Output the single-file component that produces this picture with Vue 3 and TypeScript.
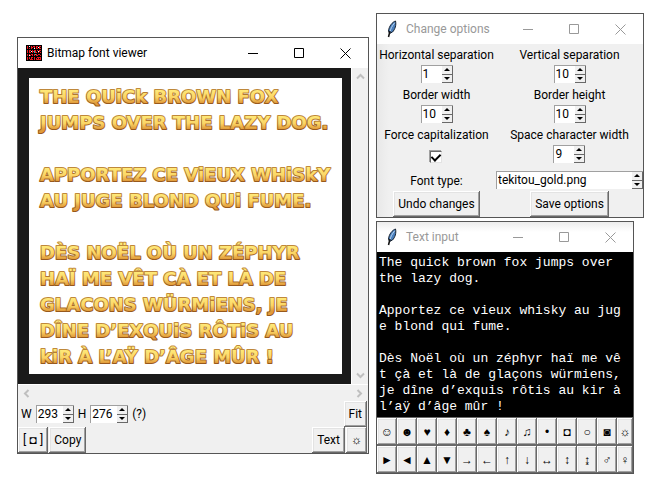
<script setup lang="ts">
import { ref } from 'vue'

interface NumberField {
  id: string
  label: string
  value: string
}

const viewWidth = ref('293')
const viewHeight = ref('276')
const fontFile = ref('tekitou_gold.png')
const forceCaps = ref(true)

const separations = ref<NumberField[]>([
  { id: 'hsep', label: 'Horizontal separation', value: '1' },
  { id: 'vsep', label: 'Vertical separation', value: '10' },
  { id: 'bwidth', label: 'Border width', value: '10' },
  { id: 'bheight', label: 'Border height', value: '10' },
])
const spaceWidth = ref('9')

const rendered: string[] = [
  'THE QUiCk BROWN FOX',
  'JUMPS OVER THE LAZY DOG.',
  '',
  'APPORTEZ CE ViEUX WHiSkY',
  'AU JUGE BLOND QUi FUME.',
  '',
  'DÈS NOËL OÙ UN ZÉPHYR',
  'HAÏ ME VÊT CÀ ET LÀ DE',
  'GLACONS WÜRMiENS, JE',
  'DÎNE D’EXQUiS RÔTiS AU',
  'kiR À L’AŸ D’ÂGE MÛR !',
]

const source = ref(
  'The quick brown fox jumps over the lazy dog.\n\n' +
    'Apportez ce vieux whisky au juge blond qui fume.\n\n' +
    'Dès Noël où un zéphyr haï me vêt çà et là de glaçons würmiens, je dîne d’exquis rôtis au kir à l’aÿ d’âge mûr !',
)

const symbols: string[] = [
  '☺', '☻', '♥', '♦', '♣', '♠', '♪', '♫', '•', '◘', '○', '◙', '☼',
  '►', '◄', '▲', '▼', '→', '←', '↑', '↓', '↔', '↕', '↨', '♂', '♀',
]

const iconPixels: string[] = [
  '................',
  '.#.#.#.##.##.##.',
  '.#...##.#.#..#..',
  '.#.#.#..#.##.##.',
  '................',
  '.#.##.#.##.#.##.',
  '.#.#..##.#..##..',
  '.#.##.#..##.#.#.',
  '................',
  '.#.#.##.#.#.##..',
  '.#.##.#.#.##..#.',
  '................',
  '.#.#.##.#..####.',
  '.#.#.#..#.#.#.#.',
  '.#..###.#.#####.',
  '................',
]
const iconPath = iconPixels
  .map((row, y) => [...row].map((c, x) => (c === '#' ? `M${x} ${y}h1v1h-1z` : '')).join(''))
  .join('')

function step(value: string, by: number): string {
  return String(Math.max(0, Number(value) + by))
}
</script>

<template>
  <main class="desktop">
    <section class="window viewer">
      <header class="titlebar">
        <svg class="app-icon" viewBox="0 0 16 16" shape-rendering="crispEdges" aria-hidden="true">
          <path d="M0 0h16v16H0z" fill="#000" />
          <path :d="iconPath" fill="#f01820" />
          <path d="M3 1h1v1H3zM8 3h1v1H8zM12 2h1v1h-1zM5 6h1v1H5zM12 6h1v1h-1zM3 10h1v1H3z" fill="#fff" />
          <path d="M8 6h1v2H8zM9 9h1v1H9z" fill="#3bb" />
        </svg>
        <h1 class="caption">Bitmap font viewer</h1>
        <button class="ctl" aria-label="Minimize"><svg viewBox="0 0 11 11"><path d="M0 5.5h10" /></svg></button>
        <button class="ctl" aria-label="Maximize"><svg viewBox="0 0 11 11"><path d="M.5.5h9v9h-9z" /></svg></button>
        <button class="ctl" aria-label="Close"><svg viewBox="0 0 11 11"><path d="M.5.5l10 10M10.5.5l-10 10" /></svg></button>
      </header>

      <div class="view-row">
        <div class="canvas">
          <div class="paper">
            <svg v-for="(line, i) in rendered" :key="i" class="gold-line">
              <defs>
                <linearGradient :id="`gold${i}`" gradientUnits="userSpaceOnUse" x1="0" y1="6" x2="0" y2="20">
                  <stop offset="0" stop-color="#ffec7c" />
                  <stop offset="0.6" stop-color="#fbd566" />
                  <stop offset="1" stop-color="#e09a3a" />
                </linearGradient>
                <linearGradient :id="`edge${i}`" gradientUnits="userSpaceOnUse" x1="0" y1="6" x2="0" y2="21">
                  <stop offset="0" stop-color="#c08a3c" />
                  <stop offset="1" stop-color="#96571c" />
                </linearGradient>
              </defs>
              <text class="gold" x="1" y="20" :fill="`url(#gold${i})`" :stroke="`url(#edge${i})`">{{ line }}</text>
            </svg>
          </div>
        </div>
        <div class="vscroll">
          <button class="arrow" aria-label="Scroll up"><svg viewBox="0 0 9 7"><path d="M1 5.5l3.500-3.500 3.500 3.500" /></svg></button>
          <button class="arrow" aria-label="Scroll down"><svg viewBox="0 0 9 7"><path d="M1 1.500l3.500 3.500 3.500-3.500" /></svg></button>
        </div>
      </div>
      <div class="hscroll">
        <button class="arrow" aria-label="Scroll left"><svg class="side" viewBox="0 0 7 9"><path d="M5.500 1l-3.500 3.500 3.500 3.500" /></svg></button>
        <button class="arrow" aria-label="Scroll right"><svg class="side" viewBox="0 0 7 9"><path d="M1.500 1l3.500 3.500-3.500 3.500" /></svg></button>
      </div>

      <div class="bar size-bar">
        <label for="vw">W</label>
        <span class="spin size">
          <input id="vw" v-model="viewWidth" />
          <span class="steps">
            <button aria-label="Increase width" @click="viewWidth = step(viewWidth, 1)"><i class="up" /></button>
            <button aria-label="Decrease width" @click="viewWidth = step(viewWidth, -1)"><i class="down" /></button>
          </span>
        </span>
        <label for="vh">H</label>
        <span class="spin size">
          <input id="vh" v-model="viewHeight" />
          <span class="steps">
            <button aria-label="Increase height" @click="viewHeight = step(viewHeight, 1)"><i class="up" /></button>
            <button aria-label="Decrease height" @click="viewHeight = step(viewHeight, -1)"><i class="down" /></button>
          </span>
        </span>
        <span>(?)</span>
        <button class="tk push">Fit</button>
      </div>
      <div class="bar">
        <button class="tk">[<span class="sym"> ◘ </span>]</button>
        <button class="tk">Copy</button>
        <button class="tk push">Text</button>
        <button class="tk sym" aria-label="Options">☼</button>
      </div>
    </section>

    <div class="side-column">
      <section class="window options inactive">
        <header class="titlebar">
          <svg class="feather" viewBox="0 0 12 18" aria-hidden="true">
            <path d="M9.500 1C6.500 2 3 6 2.500 11l1 2.500 3-1.500C9 9.500 10.500 5 9.500 1z" fill="#4a7fbd" stroke="#15202e" />
            <path d="M8.500 3C6 6 4.500 9 4 12" fill="none" stroke="#b9d6f2" />
            <path d="M4 11L2.500 17" fill="none" stroke="#111" stroke-width="1.500" />
          </svg>
          <h2 class="caption">Change options</h2>
          <button class="ctl" aria-label="Minimize"><svg viewBox="0 0 11 11"><path d="M0 5.5h10" /></svg></button>
          <button class="ctl" aria-label="Maximize"><svg viewBox="0 0 11 11"><path d="M.5.5h9v9h-9z" /></svg></button>
          <button class="ctl" aria-label="Close"><svg viewBox="0 0 11 11"><path d="M.5.5l10 10M10.5.5l-10 10" /></svg></button>
        </header>
        <form class="form" @submit.prevent>
          <div v-for="f in separations" :key="f.id" class="field">
            <label :for="f.id">{{ f.label }}</label>
            <span class="spin">
              <input :id="f.id" v-model="f.value" />
              <span class="steps">
                <button type="button" aria-label="Increase" @click="f.value = step(f.value, 1)"><i class="up" /></button>
                <button type="button" aria-label="Decrease" @click="f.value = step(f.value, -1)"><i class="down" /></button>
              </span>
            </span>
          </div>
          <div class="field last">
            <label for="caps">Force capitalization</label>
            <input id="caps" v-model="forceCaps" class="check" type="checkbox" />
          </div>
          <div class="field last">
            <label for="space">Space character width</label>
            <span class="spin">
              <input id="space" v-model="spaceWidth" />
              <span class="steps">
                <button type="button" aria-label="Increase" @click="spaceWidth = step(spaceWidth, 1)"><i class="up" /></button>
                <button type="button" aria-label="Decrease" @click="spaceWidth = step(spaceWidth, -1)"><i class="down" /></button>
              </span>
            </span>
          </div>
          <label for="font" class="font-label">Font type:</label>
          <span class="spin wide">
            <input id="font" v-model="fontFile" />
            <span class="steps">
              <button type="button" aria-label="Previous font"><i class="up" /></button>
              <button type="button" aria-label="Next font"><i class="down" /></button>
            </span>
          </span>
          <button type="button" class="tk">Undo changes</button>
          <button type="button" class="tk">Save options</button>
        </form>
      </section>

      <section class="window input inactive">
        <header class="titlebar">
          <svg class="feather" viewBox="0 0 12 18" aria-hidden="true">
            <path d="M9.500 1C6.500 2 3 6 2.500 11l1 2.500 3-1.500C9 9.500 10.500 5 9.500 1z" fill="#4a7fbd" stroke="#15202e" />
            <path d="M8.500 3C6 6 4.500 9 4 12" fill="none" stroke="#b9d6f2" />
            <path d="M4 11L2.500 17" fill="none" stroke="#111" stroke-width="1.500" />
          </svg>
          <h2 class="caption">Text input</h2>
          <button class="ctl" aria-label="Minimize"><svg viewBox="0 0 11 11"><path d="M0 5.5h10" /></svg></button>
          <button class="ctl" aria-label="Maximize"><svg viewBox="0 0 11 11"><path d="M.5.5h9v9h-9z" /></svg></button>
          <button class="ctl" aria-label="Close"><svg viewBox="0 0 11 11"><path d="M.5.5l10 10M10.5.5l-10 10" /></svg></button>
        </header>
        <textarea v-model="source" class="source" rows="10" spellcheck="false" aria-label="Text input" />
        <div class="symbols">
          <button v-for="s in symbols" :key="s" class="tk sym" @click="source += s">{{ s }}</button>
        </div>
      </section>
    </div>
  </main>
</template>

<style>
body {
  background: #fff;
}
</style>

<style scoped>
* {
  box-sizing: border-box;
}
.desktop {
  display: grid;
  grid-template-columns: minmax(0, 352fr) minmax(0, 268fr);
  align-items: start;
  gap: 7px;
  padding: 13px 13px 0 17px;
  font: 12px/20px Roboto, 'Open Sans', sans-serif;
  color: #000;
}
button,
input {
  margin: 0;
  padding: 0;
  border: 0;
  font: inherit;
  color: inherit;
  background: none;
}
.window {
  border: 1px solid #555;
  background: #f0f0f0;
}
.viewer {
  margin-top: 24px;
}
.side-column {
  display: flex;
  flex-direction: column;
  gap: 3px;
}
.input {
  margin-right: 10px;
}

.titlebar {
  display: flex;
  align-items: center;
  height: 30px;
  padding-left: 8px;
  background: #fff;
}
.input .titlebar {
  background: linear-gradient(#ececec, #fff 10px);
}
.caption {
  flex: 1;
  min-width: 0;
  margin: 0;
  font-size: 12px;
  font-weight: 400;
  white-space: nowrap;
}
.app-icon {
  width: 16px;
  height: 16px;
  margin-right: 5px;
}
.feather {
  width: 12px;
  height: 18px;
  margin: 0 8px 0 1px;
}
.inactive .caption {
  color: #999;
}
.ctl {
  display: grid;
  place-items: center;
  flex: none;
  width: 46px;
  height: 30px;
}
.ctl svg {
  width: 11px;
  height: 11px;
  fill: none;
  stroke: #000;
}
.inactive .ctl svg {
  stroke: #999;
}

.view-row {
  display: flex;
}
.canvas {
  flex: 1;
  min-width: 0;
  padding: 10px 9px 10px 11px;
  background: #1a1a1a;
}
.paper {
  padding: 5px 0 5px 10px;
  background: #fff;
}
.gold-line {
  display: block;
  width: 100%;
  height: 26px;
  overflow: visible;
}
.gold {
  font: bold 18px 'DejaVu Sans', sans-serif;
  stroke-width: 2px;
  stroke-linejoin: round;
  paint-order: stroke;
}
.vscroll,
.hscroll {
  display: flex;
  justify-content: space-between;
}
.vscroll {
  flex-direction: column;
  width: 17px;
  border-left: 1px solid #fff;
}
.hscroll {
  height: 17px;
  border-top: 1px solid #fff;
}
.arrow {
  display: grid;
  place-items: center;
  width: 17px;
  height: 17px;
}
.arrow svg {
  width: 9px;
  height: 7px;
  fill: none;
  stroke: #bfbfbf;
  stroke-width: 2px;
}
.arrow .side {
  width: 7px;
  height: 9px;
}

.bar {
  display: flex;
  align-items: center;
  gap: 1px;
  height: 26px;
  padding-right: 1px;
}
.size-bar {
  gap: 4px;
  padding-left: 3px;
}
.push {
  margin-left: auto;
}
.tk {
  height: 26px;
  padding: 0 5px;
  white-space: nowrap;
  background: #f0f0f0;
  box-shadow:
    inset -1px -1px #696969,
    inset 1px 1px #fff,
    inset -2px -2px #a0a0a0,
    inset 2px 2px #e3e3e3;
}
.sym {
  font-family: 'Liberation Sans', 'DejaVu Sans', sans-serif;
}

.spin {
  display: flex;
  width: 32px;
  height: 18px;
  border-top: 1px solid #a0a0a0;
  border-left: 1px solid #a0a0a0;
  background: #fff;
}
.spin.size {
  width: 38px;
}
.spin input {
  flex: 1;
  min-width: 0;
  padding-left: 1px;
  line-height: 17px;
  outline: none;
}
.steps {
  display: flex;
  flex-direction: column;
  width: 11px;
}
.steps button {
  display: grid;
  place-items: center;
  flex: 1;
  min-height: 0;
  background: #f0f0f0;
  border-right: 1px solid #696969;
  border-bottom: 1px solid #696969;
}
.up,
.down {
  border: 3px solid transparent;
}
.up {
  border-top: 0;
  border-bottom-color: #000;
}
.down {
  border-bottom: 0;
  border-top-color: #000;
}

.form {
  display: grid;
  grid-template-columns: minmax(0, 119fr) minmax(0, 147fr);
  justify-items: center;
  padding-top: 1px;
  background: linear-gradient(90deg, #e8e8e8, #f0f0f0 12px);
}
.field {
  display: flex;
  flex-direction: column;
  align-items: center;
  height: 40px;
  white-space: nowrap;
}
.last {
  height: 46px;
}
.font-label {
  height: 20px;
}
.wide {
  width: 100%;
}
.check {
  display: grid;
  place-items: center;
  appearance: none;
  width: 12px;
  height: 12px;
  margin-top: 6px;
  background: #fff;
  border: 1px solid #e3e3e3;
  border-top-color: #696969;
  border-left-color: #696969;
  box-shadow: -1px -1px #a0a0a0;
}
.check:checked::before {
  content: '';
  width: 4px;
  height: 7px;
  border: solid #000;
  border-width: 0 2px 2px 0;
  transform: translateY(-1px) rotate(45deg);
}

.source {
  display: block;
  width: 100%;
  margin: 0;
  padding: 3px 10px 2px 2px;
  border: 0;
  outline: none;
  resize: none;
  overflow: hidden;
  background: #000;
  color: #fff;
  font: 13px/16px 'Liberation Mono', monospace;
  word-break: break-all;
}
.symbols {
  display: grid;
  grid-template-columns: repeat(12, minmax(0, 20fr)) minmax(0, 16fr);
  row-gap: 1px;
  padding-top: 1px;
  background: #696969;
}
.symbols .tk {
  height: 27px;
  padding: 0;
}
</style>
